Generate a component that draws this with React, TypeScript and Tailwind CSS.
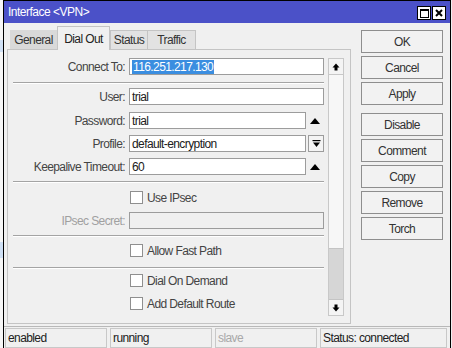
import React from 'react'

const font = "font-['Liberation_Sans',Arial,sans-serif] text-[12px] tracking-[-0.6px]"

const Tri = () => (
  <svg width="10" height="6" viewBox="0 0 10 6">
    <path d="M0 6 L5 0 L10 6 Z" fill="#000" />
  </svg>
)

const Arrow = ({ down }: { down?: boolean }) => (
  <svg width="8" height="8" viewBox="0 0 8 8" className={down ? 'rotate-180' : ''}>
    <path d="M4 0.5 L7.5 4.5 L5.5 4.5 L5.5 7.5 L2.5 7.5 L2.5 4.5 L0.5 4.5 Z" fill="#000" />
  </svg>
)

const Field = ({ label, value, selected, narrow, dropdown, disabled, mt }: {
  label: string
  value?: string
  selected?: boolean
  narrow?: boolean
  dropdown?: boolean
  disabled?: boolean
  mt: string
}) => (
  <div className={`flex h-[17px] items-center ${mt}`}>
    <div className={`w-[121px] pr-[4px] text-right ${disabled ? 'text-[#a0a0a0]' : 'text-[#444]'}`}>{label}</div>
    <div className={`h-full border border-[#9c9c9c] flex items-center pl-[2px] ${narrow || dropdown ? 'w-[177px]' : 'flex-1'} ${disabled ? 'bg-[#f0f0f0]' : 'bg-white'}`}>
      {selected ? (
        <span className="bg-[#3b8ee0] text-white px-[1px] leading-[14px]">{value}</span>
      ) : (
        <span className="text-[#202020]">{value}</span>
      )}
    </div>
    {narrow && (
      <div className="flex-1 flex justify-center items-center">
        <Tri />
      </div>
    )}
    {dropdown && (
      <div className="ml-[2px] flex-1 h-full border border-[#9c9c9c] bg-[#f4f4f4] flex items-center justify-center">
        <svg width="9" height="9" viewBox="0 0 9 9">
          <rect x="0.5" y="1" width="8" height="1.2" fill="#000" />
          <path d="M1 3.5 L8 3.5 L4.5 8 Z" fill="#000" />
        </svg>
      </div>
    )}
  </div>
)

const Check = ({ label, mt }: { label: string; mt: string }) => (
  <div className={`flex h-[17px] items-center ${mt}`}>
    <div className="w-[122px]" />
    <div className="w-[13px] h-[13px] border border-[#8f8f8f] bg-white" />
    <span className="ml-[4px] text-[#444]">{label}</span>
  </div>
)

const Sep = ({ mt }: { mt: string }) => (
  <div className={`ml-[5px] h-[2px] border-t border-[#a4a4a4] border-b border-b-white ${mt}`} />
)

const Btn = ({ label, mt }: { label: string; mt?: string }) => (
  <div className={`h-[23px] w-[82px] border border-[#8e8e8e] bg-[#f2f2f2] flex items-center justify-center text-[#333] ${mt ?? ''}`}>
    {label}
  </div>
)

export default function App() {
  return (
    <div className={`w-[452px] h-[348px] bg-[#f0f0f0] flex overflow-hidden ${font}`}>
      <div className="w-[3px] h-full bg-[#f6f6f6] flex flex-col">
        <div className="h-[40px]" />
        <div className="h-[12px] bg-[#cfe0f5]" />
        <div className="h-[190px]" />
        <div className="h-[16px] bg-[#cfe0f5]" />
      </div>
      <div className="w-[448px] h-full border-x border-t border-black flex flex-col bg-[#f0f0f0]">
        <div className="h-[22px] bg-[#4b51c8] flex items-center justify-between pl-[4px] pr-[4px]">
          <span className="text-white tracking-[-0.5px]">Interface &lt;VPN&gt;</span>
          <div className="flex gap-[1px] mt-[2px]">
            <div className="w-[14px] h-[14px] bg-white border border-black flex items-center justify-center">
              <div className="w-[9px] h-[9px] border border-black border-t-2" />
            </div>
            <div className="w-[14px] h-[14px] bg-white border border-black flex items-center justify-center">
              <svg width="8" height="8" viewBox="0 0 8 8">
                <path d="M1 1 L7 7 M7 1 L1 7" stroke="#000" strokeWidth="2" />
              </svg>
            </div>
          </div>
        </div>

        <div className="flex-1 flex">
          <div className="w-[347px] pl-[3px] flex flex-col">
            <div className="h-[26px] flex items-end pl-[3px]">
              <div className="h-[19px] w-[47px] bg-[#d9d9d9] flex items-center justify-center text-[#333]">General</div>
              <div className="h-[24px] w-[53px] bg-[#f0f0f0] border border-b-0 border-[#c4c4c4] -mb-px z-10 flex items-center justify-center text-[#222] pt-[1px]">Dial Out</div>
              <div className="h-[19px] w-[38px] bg-[#e2e2e2] border border-b-0 border-[#c4c4c4] flex items-center justify-center text-[#333]">Status</div>
              <div className="h-[19px] w-[48px] bg-[#e2e2e2] border border-b-0 border-l-0 border-[#c4c4c4] flex items-center justify-center text-[#333]">Traffic</div>
            </div>
            <div className="h-[275px] border border-[#c4c4c4] flex pr-[6px]">
              <div className="w-[316px] flex flex-col pt-[8px]">
                <Field label="Connect To:" value="116.251.217.130" selected mt="" />
                <Sep mt="mt-[7px]" />
                <Field label="User:" value="trial" mt="mt-[4px]" />
                <Field label="Password:" value="trial" narrow mt="mt-[7px]" />
                <Field label="Profile:" value="default-encryption" dropdown mt="mt-[6px]" />
                <Field label="Keepalive Timeout:" value="60" narrow mt="mt-[6px]" />
                <Sep mt="mt-[6px]" />
                <Check label="Use IPsec" mt="mt-[6px]" />
                <Field label="IPsec Secret:" disabled mt="mt-[6px]" />
                <Sep mt="mt-[6px]" />
                <Check label="Allow Fast Path" mt="mt-[5px]" />
                <Sep mt="mt-[8px]" />
                <Check label="Dial On Demand" mt="mt-[3px]" />
                <Check label="Add Default Route" mt="mt-[6px]" />
              </div>
              <div className="ml-[4px] mt-[8px] w-[16px] h-[258px] flex flex-col border border-[#c8c8c8]">
                <div className="h-[16px] bg-[#f4f4f4] border-b border-[#c8c8c8] flex items-center justify-center">
                  <Arrow />
                </div>
                <div className="h-[173px] bg-[#f7f7f7]" />
                <div className="flex-1 bg-[#d6d6d6] border-y border-[#c4c4c4]" />
                <div className="h-[15px] bg-[#f4f4f4] flex items-center justify-center">
                  <Arrow down />
                </div>
              </div>
            </div>
          </div>
          <div className="ml-[10px] mt-[7px] flex flex-col gap-[3px]">
            <Btn label="OK" />
            <Btn label="Cancel" />
            <Btn label="Apply" />
            <Btn label="Disable" mt="mt-[5px]" />
            <Btn label="Comment" />
            <Btn label="Copy" />
            <Btn label="Remove" />
            <Btn label="Torch" />
          </div>
        </div>

        <div className="h-[22px] border-t border-[#b8b8b8] flex gap-[3px] pl-[1px] pt-[1px]">
          <div className="w-[102px] border border-[#c8c8c8] pl-[2px] flex items-center text-[#202020]">enabled</div>
          <div className="w-[102px] border border-[#c8c8c8] pl-[2px] flex items-center text-[#202020]">running</div>
          <div className="w-[102px] border border-[#c8c8c8] pl-[2px] flex items-center text-[#a8a8a8]">slave</div>
          <div className="w-[127px] border border-[#c8c8c8] pl-[2px] flex items-center text-[#202020]">Status: connected</div>
        </div>
      </div>
    </div>
  )
}
